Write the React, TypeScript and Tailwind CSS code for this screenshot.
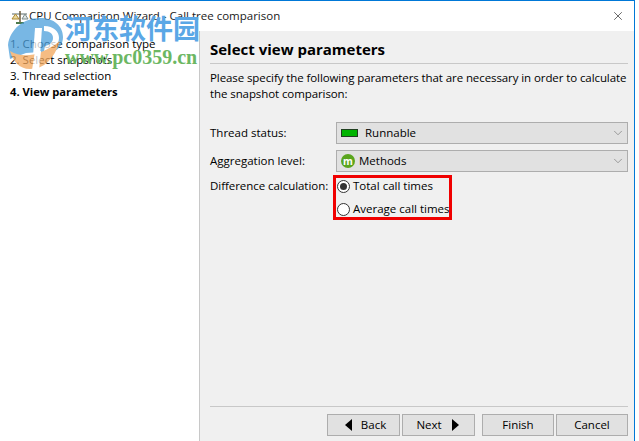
import React from 'react';
import { ChevronDown, X } from 'lucide-react';

const steps = ['1. Choose comparison type', '2. Select snapshots', '3. Thread selection'];

function Scales() {
  return (
    <svg width="18" height="17" viewBox="0 0 18 17" className="shrink-0">
      <path d="M1 6h15" stroke="#5a6a6a" strokeWidth="1" />
      <path d="M9 3v11" stroke="#6b5a3a" strokeWidth="1.5" />
      <path d="M5 15h8" stroke="#4c7a4c" strokeWidth="2" />
      <path d="M1 11h7L4.5 6z" fill="#e8d9a0" stroke="#b08a30" strokeWidth="1" />
      <path d="M11 11h6l-3-5z" fill="#dfe6e6" stroke="#7a8a8a" strokeWidth="1" />
    </svg>
  );
}

function Combo({ icon, label }: { icon: React.ReactNode; label: string }) {
  return (
    <div className="flex-1 h-[22px] flex items-center bg-[#e1e1e1] border border-[#adadad] pl-1">
      {icon}
      <span>{label}</span>
      <ChevronDown className="ml-auto mr-[2px] w-[14px] h-[14px] text-[#666666]" strokeWidth={1} />
    </div>
  );
}

function Radio({ checked, label }: { checked?: boolean; label: string }) {
  return (
    <div className="h-[16px] flex items-center gap-[3px]">
      <span className="ml-[1px] w-[13px] h-[13px] rounded-full bg-white border border-[#333333] flex items-center justify-center">
        {checked && <span className="w-[7px] h-[7px] rounded-full bg-[#333333]" />}
      </span>
      <span>{label}</span>
    </div>
  );
}

function WizardButton({ children, width }: { children: React.ReactNode; width: string }) {
  return (
    <button className={`${width} h-[22px] flex items-center justify-center gap-[9px] bg-[#e1e1e1] border border-[#adadad]`}>
      {children}
    </button>
  );
}

export default function App() {
  return (
    <div
      className="w-[639px] h-[441px] bg-white text-[11.5px] leading-[16px] text-black overflow-hidden"
      style={{ fontFamily: '"Open Sans", "Noto Sans", sans-serif' }}
    >
      <div className="relative w-[635px] h-full flex flex-col border-t border-r border-[#0078d7]">
        {/* Title bar */}
        <div className="h-[30px] shrink-0 flex items-center pl-[11px] pr-[9px]">
          <Scales />
          <span className="text-[#1a1a1a]">CPU Comparison Wizard - Call tree comparison</span>
          <X className="ml-auto w-[14px] h-[14px]" strokeWidth={1} />
        </div>

        <div className="flex-1 flex min-h-0">
          {/* Steps */}
          <aside className="w-[200px] shrink-0 border-r border-[#c8c8c8] pl-[10px] pt-[5px]">
            {steps.map((step) => (
              <div key={step}>{step}</div>
            ))}
            <div className="font-bold text-[11.2px]">4. View parameters</div>
          </aside>

          {/* Page */}
          <main className="flex-1 bg-[#f0f0f0] pl-[10px] pr-[6px] pt-[8px] pb-[5px] flex flex-col">
            <h1 className="text-[15px] leading-[20px] font-bold">Select view parameters</h1>
            <div className="mt-[4px] border-t border-[#c8c8c8]" />
            <p className="mt-[6px] whitespace-nowrap tracking-[-0.09px]">
              Please specify the following parameters that are necessary in order to calculate
              <br />
              the snapshot comparison:
            </p>

            <div className="mt-[20px] flex items-center">
              <span className="w-[126px]">Thread status:</span>
              <Combo
                label="Runnable"
                icon={<span className="w-[17px] h-[8px] mr-[7px] bg-[#00b400] border border-[#1f3f1f]" />}
              />
            </div>
            <div className="mt-[6px] flex items-center">
              <span className="w-[126px]">Aggregation level:</span>
              <Combo
                label="Methods"
                icon={
                  <span className="w-[14px] h-[14px] mr-[4px] rounded-full bg-[#5aa51e] text-white text-[10px] leading-[14px] font-bold text-center">
                    m
                  </span>
                }
              />
            </div>
            <div className="mt-[6px] flex">
              <span className="w-[126px] tracking-[-0.05px]">Difference calculation:</span>
              <div className="relative flex flex-col gap-[7px]">
                <Radio checked label="Total call times" />
                <Radio label="Average call times" />
                <div className="absolute left-[-3px] top-[-3px] w-[119px] h-[45px] border-[3px] border-[#f00000]" />
              </div>
            </div>

            <div className="mt-auto border-t border-[#c8c8c8] pt-[7px] flex justify-end">
              <div className="flex gap-[2px]">
                <WizardButton width="w-[73px] pl-[4px]">
                  <span className="w-0 h-0 border-y-[6px] border-y-transparent border-r-[7px] border-r-black" />
                  <span>Back</span>
                </WizardButton>
                <WizardButton width="w-[73px] pr-[2px]">
                  <span>Next</span>
                  <span className="ml-[1px] w-0 h-0 border-y-[6px] border-y-transparent border-l-[7px] border-l-black" />
                </WizardButton>
              </div>
              <div className="ml-[7px] flex gap-[2px]">
                <WizardButton width="w-[72px]">Finish</WizardButton>
                <WizardButton width="w-[72px]">Cancel</WizardButton>
              </div>
            </div>
          </main>
        </div>

        {/* Watermark over the top left corner */}
        <div className="absolute left-0 top-0 w-[205px] h-[75px] pointer-events-none">
          <svg width="60" height="60" viewBox="0 0 60 60" className="absolute left-[6px] top-[12px] opacity-75">
            <path d="M2 32C4 16 18 5 34 5c14 0 23 8 23 19 0 6-3 11-8 14L20 40 4 46z" fill="#4b9fdc" />
            <path d="M29 15h7l-3 42h-7z" fill="#ffffff" />
            <path d="M38 13c10 0 15 6 15 12 0 7-6 12-15 13l1-5c5-1 8-4 8-8s-3-7-9-7z" fill="#ffffff" />
            <path d="M4 38c14 8 30 5 50-10-6 18-16 28-30 28C13 56 7 48 4 38z" fill="#f2a65a" />
            <path d="M29 38h6l-2 19h-7z" fill="#ffffff" />
          </svg>
          <div
            className="absolute left-[65px] top-[9px] text-[27px] leading-[36px] font-bold text-[#5aa7e6] whitespace-nowrap"
            style={{ fontFamily: '"Noto Sans CJK SC", sans-serif' }}
          >
            河东软件园
          </div>
          <div
            className="absolute left-[65px] top-[45px] text-[20px] leading-[22px] font-bold text-[#6cb763] whitespace-nowrap"
            style={{ fontFamily: '"Liberation Serif", serif' }}
          >
            www.pc0359.cn
          </div>
        </div>
      </div>
    </div>
  );
}
